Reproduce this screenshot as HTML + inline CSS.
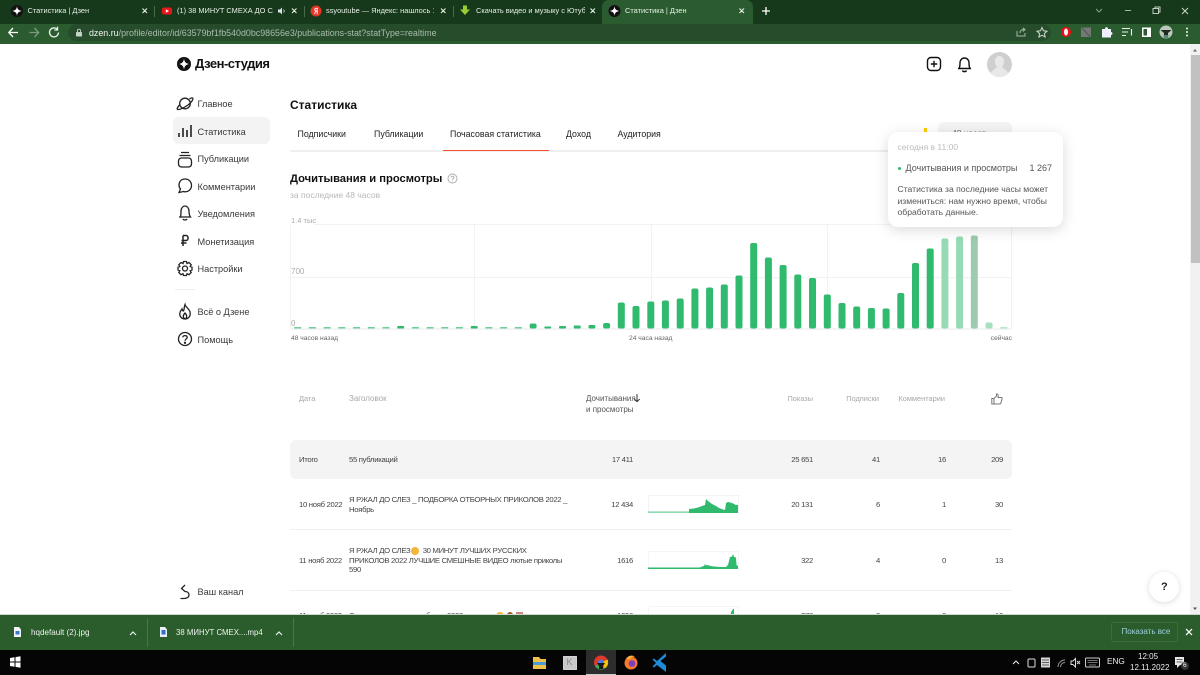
<!DOCTYPE html>
<html lang="ru"><head><meta charset="utf-8"><title>Статистика | Дзен</title>
<style>
html,body{margin:0;padding:0;width:1200px;height:675px;overflow:hidden;background:#fff}
#r{position:relative;width:1200px;height:675px;overflow:hidden;font-family:"Liberation Sans","Noto Sans CJK SC",sans-serif;filter:blur(.3px)}
.t{position:absolute;white-space:nowrap;line-height:0;font-size:9.5px;color:#333}
.b{position:absolute}
.w{color:#e6efe6;font-size:7.400px}
.n{font-size:9.200px;color:#3a3a3a;left:197.500px}
.h{font-size:7.400px;color:#a8a8a8}
.c{font-size:7.700px;letter-spacing:-.3px;color:#444}
.m{font-size:8.800px;color:#222;top:133.500px}
.l{font-size:6.700px;color:#666;top:338.500px}
.p{font-size:8.600px;color:#555}
svg{position:absolute;overflow:visible}
</style></head><body><div id="r">

<!-- main content -->
<div class="t" style="left:195px;top:64px;font-size:13px;letter-spacing:-.5px;font-weight:bold;color:#111">Дзен-студия</div>
<svg style="left:176px;top:56px" width="16" height="16" viewBox="0 0 16 16"><circle cx="8" cy="8" r="7" fill="#111"/><path d="M8 2.200C8.300 6 10 7.700 13.800 8 10 8.300 8.300 10 8 13.800 7.700 10 6 8.300 2.200 8 6 7.700 7.700 6 8 2.200Z" fill="#fff"/></svg>

<div class="b" style="left:173px;top:117px;width:97px;height:27px;background:#f3f3f3;border-radius:6px"></div>
<div class="t n" style="top:104px">Главное</div>
<div class="t n" style="top:131.500px">Статистика</div>
<div class="t n" style="top:159px">Публикации</div>
<div class="t n" style="top:186.500px">Комментарии</div>
<div class="t n" style="top:214px">Уведомления</div>
<div class="t n" style="top:241.500px">Монетизация</div>
<div class="t n" style="top:269px">Настройки</div>
<div class="b" style="left:175px;top:289px;width:20px;height:1px;background:#eee"></div>
<div class="t n" style="top:312px">Всё о Дзене</div>
<div class="t n" style="top:339.500px">Помощь</div>
<div class="t n" style="top:591.500px">Ваш канал</div>

<svg style="left:176px;top:95px" width="18" height="260" viewBox="0 0 18 260" fill="none" stroke="#222" stroke-width="1.300">
<circle cx="9" cy="8.500" r="5.300"/><path d="M4 9.500C1.500 12 .7 13.800 1.500 14.300 3 15.200 8 12.800 12 10 15.500 7.500 17.500 4 16.800 3.200 16.200 2.500 15 3 13.500 3.800"/>
<path d="M3 42V38M7 42V33M11 42V35M15 42V30" stroke-width="1.600"/>
<path d="M5 57.500H13M3.500 60.500H14.500"/><rect x="2.500" y="63" width="13" height="9" rx="3"/>
<path d="M9 84C5 84 3 87 3 90C3 92 4 93.500 4.500 94L3 97.500 7.500 96.500C8 96.700 8.500 96.800 9 96.800 13 96.800 15.500 94 15.500 90.500 15.500 87 13 84 9 84Z"/>
<path d="M4.500 122C5 120 5 118 5 116 5 113 7 111 9 111 11 111 13 113 13 116 13 118 13 120 14.500 122ZM3 122H15M7 124C7.500 125.300 10.500 125.300 11 124"/>
<path d="M7 140.500H10C12.800 140.500 12.800 145.500 10 145.500H5.500M7 140.500V151M5 148H10.500" stroke-width="1.500"/>
<circle cx="9" cy="173.500" r="2.500"/><path d="M7.500 166.500H10.500L11 168.500 13 167.500 15.200 169.700 14.200 171.500 16 172.200V175L14.200 175.700 15.200 177.500 13 179.700 11 178.700 10.500 180.500H7.500L7 178.700 5 179.700 2.800 177.500 3.800 175.700 2 175V172.200L3.800 171.500 2.800 169.700 5 167.500 7 168.500Z"/>
<path d="M9 209.500C9.500 212 13 213.500 14 217 15 221 12.500 224 9 224 5.500 224 3 221 4 217.500 4.500 215.500 5.500 215 6 214 6.500 215.500 7 216 7.500 216 8.500 214 8 212 9 209.500ZM9 224C7 223 6.500 220.500 9 218 11.500 220.500 11 223 9 224Z"/>
<circle cx="9" cy="244" r="6.500"/><path d="M6.800 242.300C7 240 11.200 240 11.200 242.500 11.200 244 9 244 9 245.800"/><circle cx="9" cy="247.800" r=".5" fill="#222"/>
</svg>
<svg style="left:176px;top:583px" width="18" height="18" viewBox="0 0 18 18" fill="none" stroke="#222" stroke-width="1.300"><path d="M9 2L5.500 5.500 9 8.500C12 8.500 13 10.500 13 12 13 14 11 15.500 8 15.500H4.500"/></svg>

<svg style="left:926px;top:56px" width="16" height="16" viewBox="0 0 16 16" fill="none" stroke="#111" stroke-width="1.400"><rect x="1.500" y="1.500" width="13" height="13" rx="3.500"/><path d="M8 4.800V11.200M4.800 8H11.200"/></svg>
<svg style="left:957px;top:56px" width="15" height="17" viewBox="0 0 15 17" fill="none" stroke="#111" stroke-width="1.400"><path d="M2 12.500C3 11 3 9 3 7 3 4 5 2 7.500 2 10 2 12 4 12 7 12 9 12 11 13 12.500ZM1 12.500H14M5.500 14.500C6 16 9 16 9.500 14.500"/></svg>
<svg style="left:987px;top:52px" width="25" height="25" viewBox="0 0 25 25"><defs><clipPath id="av"><circle cx="12.500" cy="12.500" r="12.500"/></clipPath></defs><circle cx="12.500" cy="12.500" r="12.500" fill="#cfcfcf"/><g clip-path="url(#av)" fill="#e8e8e8"><path d="M12.500 4C9.500 4 8 6.500 8 9.500 8 12 9 14 10 15L3 21V25H22V21L15 15C16 14 17 12 17 9.500 17 6.500 15.500 4 12.500 4Z"/></g></svg>

<div class="t" style="left:290px;top:105px;font-size:12px;font-weight:bold;color:#111">Статистика</div>
<div class="t m" style="left:297.500px">Подписчики</div>
<div class="t m" style="left:374px">Публикации</div>
<div class="t m" style="left:450px">Почасовая статистика</div>
<div class="t m" style="left:566px">Доход</div>
<div class="t m" style="left:617.500px">Аудитория</div>
<div class="b" style="left:290px;top:150px;width:721px;height:1.500px;background:#efefef"></div>
<div class="b" style="left:443px;top:149.500px;width:106px;height:1.500px;background:#fc5230"></div>
<div class="b" style="left:924px;top:128px;width:3px;height:6px;background:#fc0"></div>
<div class="b" style="left:938px;top:122px;width:74px;height:26px;background:#f4f4f4;border-radius:6px"></div>
<div class="t" style="left:952px;top:133px;font-size:8.500px;color:#666">48 часов</div>
<div class="t" style="left:290px;top:179px;font-size:11.200px;font-weight:bold;color:#111">Дочитывания и просмотры</div>
<svg style="left:447px;top:173px" width="11" height="11" viewBox="0 0 11 11" fill="none" stroke="#aaa" stroke-width=".9"><circle cx="5.500" cy="5.500" r="4.500"/><path d="M4 4.300C4.200 2.800 7 2.800 7 4.500 7 5.500 5.500 5.500 5.500 6.800M5.500 7.600V8.300"/></svg>
<div class="t" style="left:290px;top:195px;font-size:8.500px;color:#b8b8b8">за последние 48 часов</div>

<!-- chart -->
<svg style="left:0;top:0" width="1200" height="675">
<g stroke="#f2f2f2" stroke-width="1" fill="none">
<path d="M290.500 224.500H1011.500V328.500M290.500 277.500H1011.500M290.500 224.500V328.500M474.500 224.500V328.500M651.500 224.500V328.500M827.500 224.500V328.500"/>
<path d="M290.500 329H1011.500" stroke="#e8eaf0"/>
</g>
<g fill="#2fba6e">
<rect x="294.200" y="327" width="7" height="1.500" fill="#6fd09a"/><rect x="308.900" y="327" width="7" height="1.500" fill="#6fd09a"/><rect x="323.600" y="327" width="7" height="1.500" fill="#6fd09a"/><rect x="338.300" y="327" width="7" height="1.500" fill="#6fd09a"/><rect x="353" y="327" width="7" height="1.500" fill="#6fd09a"/><rect x="367.800" y="327" width="7" height="1.500" fill="#6fd09a"/><rect x="382.500" y="327" width="7" height="1.500" fill="#6fd09a"/>
<rect x="397.200" y="326" width="7" height="2.500" rx="1"/>
<rect x="411.900" y="327" width="7" height="1.500" fill="#6fd09a"/><rect x="426.600" y="327" width="7" height="1.500" fill="#6fd09a"/><rect x="441.300" y="327" width="7" height="1.500" fill="#6fd09a"/><rect x="456" y="327" width="7" height="1.500" fill="#6fd09a"/>
<rect x="470.700" y="326" width="7" height="2.500" rx="1"/>
<rect x="485.400" y="327" width="7" height="1.500" fill="#6fd09a"/><rect x="500.100" y="327" width="7" height="1.500" fill="#6fd09a"/><rect x="514.900" y="327" width="7" height="1.500" fill="#6fd09a"/>
<rect x="529.600" y="323.500" width="7" height="5" rx="2"/>
<rect x="544.300" y="326.500" width="7" height="2" rx="1"/>
<rect x="559" y="326" width="7" height="2.500" rx="1"/>
<rect x="573.700" y="325.500" width="7" height="3" rx="1"/>
<rect x="588.400" y="325" width="7" height="3.500" rx="1.500"/>
<rect x="603.100" y="323" width="7" height="5.500" rx="2"/>
<rect x="617.800" y="302.500" width="7" height="26" rx="2"/>
<rect x="632.500" y="306" width="7" height="22.500" rx="2"/>
<rect x="647.300" y="301.500" width="7" height="27" rx="2"/>
<rect x="661.900" y="300.500" width="7" height="28" rx="2"/>
<rect x="676.700" y="298.500" width="7" height="30" rx="2"/>
<rect x="691.400" y="288.500" width="7" height="40" rx="2"/>
<rect x="706.100" y="287.500" width="7" height="41" rx="2"/>
<rect x="720.800" y="284.500" width="7" height="44" rx="2"/>
<rect x="735.500" y="275.500" width="7" height="53" rx="2"/>
<rect x="750.200" y="243" width="7" height="85.500" rx="2"/>
<rect x="764.900" y="257.500" width="7" height="71" rx="2"/>
<rect x="779.600" y="265" width="7" height="63.500" rx="2"/>
<rect x="794.300" y="274.500" width="7" height="54" rx="2"/>
<rect x="809" y="278" width="7" height="50.500" rx="2"/>
<rect x="823.800" y="294.500" width="7" height="34" rx="2"/>
<rect x="838.500" y="303" width="7" height="25.500" rx="2"/>
<rect x="853.200" y="306.500" width="7" height="22" rx="2"/>
<rect x="867.900" y="308" width="7" height="20.500" rx="2"/>
<rect x="882.600" y="308.500" width="7" height="20" rx="2"/>
<rect x="897.300" y="293" width="7" height="35.500" rx="2"/>
<rect x="912" y="263" width="7" height="65.500" rx="2"/>
<rect x="926.700" y="248.500" width="7" height="80" rx="2"/>
<rect x="941.400" y="238.500" width="7" height="90" rx="2" fill="#96dbb3"/>
<rect x="956.100" y="236.500" width="7" height="92" rx="2" fill="#96dbb3"/>
<rect x="970.800" y="235.500" width="7" height="93" rx="2" fill="#9dcbad"/>
<rect x="985.600" y="322.500" width="7" height="6" rx="2" fill="#a5e0bf"/>
<rect x="1000.300" y="327" width="7" height="1.500" fill="#b5e6cb"/>
</g>
</svg>
<div class="b" style="left:290px;top:216px;width:24px;height:9px;background:#fff"></div>
<div class="t" style="left:291px;top:220.500px;font-size:7.500px;color:#aaa">1.4 тыс</div>
<div class="t" style="left:291px;top:272px;font-size:8px;color:#aaa">700</div>
<div class="t" style="left:291px;top:324px;font-size:8px;color:#aaa">0</div>
<div class="t l" style="left:291px">48 часов назад</div>
<div class="t l" style="left:629px">24 часа назад</div>
<div class="t l" style="right:188px">сейчас</div>

<!-- table -->
<div class="t h" style="left:299px;top:399px">Дата</div>
<div class="t h" style="left:349px;top:399px;font-size:8px">Заголовок</div>
<div class="t" style="left:586px;top:399px;font-size:8px;color:#555">Дочитывания</div>
<div class="t" style="left:586px;top:409.500px;font-size:8px;color:#555">и просмотры</div>
<svg style="left:633px;top:393px" width="8" height="10" viewBox="0 0 8 10" fill="none" stroke="#333" stroke-width="1"><path d="M4 1V8.500M1.300 6L4 8.700 6.700 6"/></svg>
<div class="t h" style="right:387px;top:399px">Показы</div>
<div class="t h" style="right:321px;top:399px">Подписки</div>
<div class="t h" style="right:255px;top:399px">Комментарии</div>
<svg style="left:991px;top:393px" width="12" height="12" viewBox="0 0 12 12" fill="none" stroke="#777" stroke-width="1"><path d="M.8 5.500H3V11H.8ZM3 5.500L5.500 3V1C7 .7 7.500 2 7 4.500H10.500C11.300 4.500 11.300 5.500 11 6L9.800 10.200C9.600 10.800 9.200 11 8.700 11H3"/></svg>

<div class="b" style="left:290px;top:440px;width:722px;height:39px;background:#f4f4f4;border-radius:6px"></div>
<div class="t c" style="left:299px;top:460px">Итого</div>
<div class="t c" style="left:349px;top:460px">55 публикаций</div>
<div class="t c" style="right:567px;top:460px">17 411</div>
<div class="t c" style="right:387px;top:460px">25 651</div>
<div class="t c" style="right:320px;top:460px">41</div>
<div class="t c" style="right:254px;top:460px">16</div>
<div class="t c" style="right:197px;top:460px">209</div>

<div class="t c" style="left:299px;top:505px">10 нояб 2022</div>
<div class="t c" style="left:349px;top:500px">Я РЖАЛ ДО СЛЕЗ _ ПОДБОРКА ОТБОРНЫХ ПРИКОЛОВ 2022 _</div>
<div class="t c" style="left:349px;top:510px">Ноябрь</div>
<div class="t c" style="right:567px;top:505px">12 434</div>
<svg style="left:648px;top:495px" width="91" height="18" viewBox="0 0 91 18"><rect x=".5" y=".5" width="90" height="17" fill="none" stroke="#f3f3f3"/><path d="M0 16.500H41V17.800H0Z" fill="#6fcf9a"/><path d="M41 18V14L46 13.500 50 12.500 54 11 57 10 58 4 60 6 64 9 68 11 71 13 75 14.500 77 15 78 8 80 7 84 8 87 9.500 87.500 10 90 10V18Z" fill="#2fba6e"/></svg>
<div class="t c" style="right:387px;top:505px">20 131</div>
<div class="t c" style="right:320px;top:505px">6</div>
<div class="t c" style="right:254px;top:505px">1</div>
<div class="t c" style="right:197px;top:505px">30</div>
<div class="b" style="left:290px;top:529px;width:722px;height:1px;background:#f0f0f0"></div>

<div class="t c" style="left:299px;top:560.500px">11 нояб 2022</div>
<div class="t c" style="left:349px;top:550.500px">Я РЖАЛ ДО СЛЕЗ</div>
<div class="b" style="left:411px;top:546.500px;width:8px;height:8px;border-radius:50%;background:#f5b53a"></div>
<div class="t c" style="left:422.700px;top:550.500px">30 МИНУТ ЛУЧШИХ РУССКИХ</div>
<div class="t c" style="left:349px;top:560.500px">ПРИКОЛОВ 2022 ЛУЧШИЕ СМЕШНЫЕ ВИДЕО лютые приколы</div>
<div class="t c" style="left:349px;top:570px">590</div>
<div class="t c" style="right:567px;top:560.500px">1616</div>
<svg style="left:648px;top:551px" width="91" height="18" viewBox="0 0 91 18"><rect x=".5" y=".5" width="90" height="17" fill="none" stroke="#f5f5f5"/><path d="M0 16.500H52L54 15.500 56 15 57 13 58 14.500 60 14 62 15 66 15.500 72 16 78 16 80 14 82 6 84 5.500 85 3 86 6 88 6.500 88.500 14 90 15V18H0Z" fill="#2fba6e"/></svg>
<div class="t c" style="right:387px;top:560.500px">322</div>
<div class="t c" style="right:320px;top:560.500px">4</div>
<div class="t c" style="right:254px;top:560.500px">0</div>
<div class="t c" style="right:197px;top:560.500px">13</div>
<div class="b" style="left:290px;top:590px;width:722px;height:1px;background:#f0f0f0"></div>

<div class="t c" style="left:299px;top:616px">11 нояб 2022</div>
<div class="t c" style="left:349px;top:616px">Смешные приколы подборка 2022 лютые приколы</div>
<div class="b" style="left:496px;top:611.500px;width:8px;height:8px;border-radius:50%;background:#f5b53a"></div>
<div class="b" style="left:506.500px;top:611.500px;width:6px;height:6px;border-radius:50%;background:#a5562a"></div>
<div class="b" style="left:516px;top:611.500px;width:7px;height:6px;background:#c98a7a"></div>
<div class="t c" style="right:567px;top:616px">1096</div>
<div class="t c" style="right:387px;top:616px">372</div>
<div class="t c" style="right:320px;top:616px">3</div>
<div class="t c" style="right:254px;top:616px">0</div>
<div class="t c" style="right:197px;top:616px">10</div>
<svg style="left:648px;top:606px" width="91" height="12" viewBox="0 0 91 12"><path d="M.5 12V.5H90.500V12" fill="none" stroke="#f5f5f5"/><path d="M83 12V6L85 3 86 3V12Z" fill="#2fba6e"/></svg>

<!-- tooltip -->
<div class="b" style="left:887.500px;top:132px;width:175px;height:95px;background:#fff;border-radius:10px;box-shadow:0 3px 14px rgba(0,0,0,.15)"></div>
<div class="t" style="left:897.500px;top:147px;font-size:8.500px;color:#bbb">сегодня в 11:00</div>
<div class="b" style="left:897.500px;top:166.500px;width:3px;height:3px;border-radius:50%;background:#2fba6e"></div>
<div class="t" style="left:905.500px;top:168px;font-size:9px;color:#555">Дочитывания и просмотры</div>
<div class="t" style="right:148px;top:168px;font-size:9px;color:#555">1 267</div>
<div class="t p" style="left:897.500px;top:189px">Статистика за последние часы может</div>
<div class="t p" style="left:897.500px;top:200.500px">измениться: нам нужно время, чтобы</div>
<div class="t p" style="left:897.500px;top:211.500px">обработать данные.</div>

<!-- help -->
<div class="b" style="left:1149px;top:572px;width:30px;height:30px;border-radius:50%;background:#fff;box-shadow:0 1px 6px rgba(0,0,0,.15)"></div>
<div class="t" style="left:1161px;top:587px;font-size:11px;font-weight:bold;color:#222">?</div>

<!-- scrollbar -->
<div class="b" style="left:1190px;top:44px;width:10px;height:570px;background:#f1f1f1"></div>
<div class="b" style="left:1191px;top:55px;width:8.500px;height:208px;background:#c1c1c1"></div>
<svg style="left:1190px;top:47px" width="10" height="6"><path d="M3 4.500H7L5 2Z" fill="#666"/></svg>
<svg style="left:1190px;top:606px" width="10" height="6"><path d="M3 1.500H7L5 4Z" fill="#555"/></svg>

<!-- chrome -->
<div class="b" style="left:0;top:0;width:1200px;height:24px;background:#17391b"></div>
<div class="b" style="left:0;top:24px;width:1200px;height:20px;background:#2b5c30"></div>
<div class="b" style="left:602px;top:0;width:151px;height:24px;background:#2b5c30;border-radius:7px 7px 0 0"></div>
<div class="b" style="left:68px;top:24px;width:983px;height:17px;background:#264c2c;border-radius:9px"></div>

<svg style="left:0;top:0" width="1200" height="44">
<circle cx="17" cy="11" r="6" fill="#111"/><path d="M17 6C17.200 9 18.500 10.500 22 11 18.500 11.500 17.200 13 17 16 16.800 13 15.500 11.500 12 11 15.500 10.500 16.800 9 17 6Z" fill="#fff"/>
<circle cx="614.500" cy="11" r="6" fill="#111"/><path d="M614.500 6C614.700 9 616 10.500 619.500 11 616 11.500 614.700 13 614.500 16 614.300 13 613 11.500 609.500 11 613 10.500 614.300 9 614.500 6Z" fill="#fff"/>
<rect x="162" y="7.500" width="10" height="7" rx="2" fill="#e8141c"/><path d="M165.800 9.300L169 11 165.800 12.700Z" fill="#fff"/>
<circle cx="316" cy="11" r="5.500" fill="#e53527"/><path d="M317.200 7.800V14.200M317.200 8.300H316C314.500 8.300 314.300 11 316 11H317.200M315.800 11L314.500 14" stroke="#fff" stroke-width=".9" fill="none"/>
<path d="M463 5.500H467V9.500H470L465 15 460 9.500H463Z" fill="#9acd32"/>
<g stroke="#4a6a4c" stroke-width="1"><path d="M154.500 6V17M304.500 6V17M453.500 6V17"/></g>
<g stroke="#e6efe6" stroke-width="1.100" fill="none"><path d="M142.500 8.500L147 13M147 8.500L142.500 13M292 8.500L296.500 13M296.500 8.500L292 13M441 8.500L445.500 13M445.500 8.500L441 13M590.500 8.500L595 13M595 8.500L590.500 13M739.500 8.500L744 13M744 8.500L739.500 13"/></g>
<path d="M278 9.500H280L282 7.500V14.500L280 12.500H278Z" fill="#dde"/><path d="M283.500 9.500Q285 11 283.500 12.500" stroke="#dde" fill="none" stroke-width=".8"/>
<path d="M766 7V15M762 11H770" stroke="#fff" stroke-width="1.300"/>
<path d="M1096 9L1099 12 1102 9" stroke="#8aa08c" fill="none"/>
<path d="M1125 10.500H1131" stroke="#a5b5a6"/>
<path d="M1153 8.500H1158.500V13.500H1153ZM1155 8.500V7H1160V12H1158.500" stroke="#c0ccc0" fill="none"/>
<path d="M1182 8L1188 14M1188 8L1182 14" stroke="#c8d4c8" fill="none"/>
<!-- toolbar -->
<path d="M18 32.500H9M13 28L8.800 32.500 13 37" stroke="#fff" stroke-width="1.300" fill="none"/>
<path d="M29.500 32.500H38.500M34.500 28L38.700 32.500 34.500 37" stroke="#7c9a7f" stroke-width="1.300" fill="none"/>
<path d="M58.500 32.500A4.500 4.500 0 1 1 57 29M57.500 26.800V30H54.300" stroke="#f0f4f0" stroke-width="1.300" fill="none"/>
<rect x="76" y="32" width="6" height="4.500" rx=".8" fill="#c5d2c6"/><path d="M77.500 32V30.500C77.500 28.800 80.500 28.800 80.500 30.500V32" stroke="#c5d2c6" fill="none" stroke-width=".9"/>
<path d="M1017 31V36H1025V33M1020 33C1020 30.500 1022 29.500 1024 29.500M1022.800 27.800L1025 29.500 1022.800 31.500" stroke="#a8b9aa" fill="none"/>
<path d="M1042 27.500L1043.500 30.800 1047 31.200 1044.400 33.500 1045.100 37 1042 35.200 1038.900 37 1039.600 33.500 1037 31.200 1040.500 30.800Z" stroke="#d0dad0" fill="none"/>
<circle cx="1066" cy="32" r="5" fill="#e81018"/><ellipse cx="1066" cy="32" rx="2" ry="3.500" fill="#fff"/>
<path d="M1081 27.500H1091V37H1081Z" fill="#777"/><path d="M1082 28L1090 36.500" stroke="#4f6352" stroke-width="1.500"/>
<path d="M1102 29H1105C1105 26.500 1108 26.500 1108 29H1111V32C1113 32 1113 35 1111 35V37.500H1102Z" fill="#eef"/>
<path d="M1122 28.500H1130M1122 32H1128M1122 35.500H1126M1131.500 29V35.500" stroke="#eef2ee" stroke-width="1.100" fill="none"/>
<rect x="1142" y="27.500" width="9" height="9.500" fill="#fff"/><rect x="1143.500" y="29" width="3.500" height="6.500" fill="#2b5c30"/>
<circle cx="1166" cy="32" r="6.500" fill="#bcc7bd"/><path d="M1160.500 30H1171.500L1168 33V38H1164V33Z" fill="#1d2a1e"/><path d="M1162 35L1164 38H1168L1170 35" fill="#7a9" opacity=".7"/>
<g fill="#f0f4f0"><circle cx="1187" cy="28.500" r="1"/><circle cx="1187" cy="32" r="1"/><circle cx="1187" cy="35.500" r="1"/></g>
</svg>
<div class="t w" style="left:27.500px;top:11px">Статистика | Дзен</div>
<div class="t w" style="left:177px;top:11px;width:96px;overflow:hidden;height:12px;line-height:12px;margin-top:-6px">(1) 38 МИНУТ СМЕХА ДО СЛЕЗ</div>
<div class="t w" style="left:326px;top:11px;width:108px;overflow:hidden;height:12px;line-height:12px;margin-top:-6px">ssyoutube — Яндекс: нашлось 1 млн</div>
<div class="t w" style="left:476px;top:11px;width:109px;overflow:hidden;height:12px;line-height:12px;margin-top:-6px">Скачать видео и музыку с Ютуба</div>
<div class="t w" style="left:625px;top:11px">Статистика | Дзен</div>
<div class="t" style="left:89px;top:32.500px;font-size:8.900px;color:#a9bcab"><span style="color:#f0f4f0">dzen.ru</span>/profile/editor/id/63579bf1fb540d0bc98656e3/publications-stat?statType=realtime</div>

<!-- downloads bar -->
<div class="b" style="left:0;top:614px;width:1200px;height:1px;background:#cfd6cf"></div>
<div class="b" style="left:0;top:615px;width:1200px;height:35px;background:#2a5c2c"></div>
<svg style="left:0;top:615px" width="1200" height="35">
<path d="M14 12H19L21 14.500V22H14Z" fill="#f2f5f8"/><rect x="15.500" y="16" width="4" height="3.500" fill="#3b78c9"/>
<path d="M160 12H165L167 14.500V22H160Z" fill="#e8eff8"/><rect x="161.500" y="15" width="4" height="4.500" fill="#2f6fc4"/>
<path d="M130 20L133 17 136 20M276 20L279 17 282 20" stroke="#e8efe8" fill="none" stroke-width="1.200"/>
<path d="M147.500 3V32M293.500 3V32" stroke="#4a764c"/>
<rect x="1111.500" y="7.500" width="66" height="19" rx="2" fill="none" stroke="#3f6b42"/>
<path d="M1186 14L1192 20M1192 14L1186 20" stroke="#f0f4f0" stroke-width="1.300"/>
</svg>
<div class="t" style="left:31px;top:633px;font-size:8.100px;color:#eef3ee">hqdefault (2).jpg</div>
<div class="t" style="left:176px;top:633px;font-size:7.800px;color:#eef3ee">38 МИНУТ СМЕХ....mp4</div>
<div class="t" style="left:1121.500px;top:632px;font-size:8px;color:#9fcfe0">Показать все</div>

<!-- taskbar -->
<div class="b" style="left:0;top:650px;width:1200px;height:25px;background:#050505"></div>
<div class="b" style="left:586px;top:650px;width:30px;height:25px;background:#2d2d2d"></div>
<div class="b" style="left:586px;top:674px;width:30px;height:1px;background:#ccc"></div>
<svg style="left:0;top:650px" width="1200" height="25">
<path d="M10 8L14.500 7.300V11.500H10ZM15.500 7.100L20.500 6.300V11.500H15.500ZM10 12.500H14.500V16.700L10 16ZM15.500 12.500H20.500V17.700L15.500 16.900Z" fill="#fff"/>
<path d="M533 7H539L540.500 9H546V19H533Z" fill="#f0c14a"/><rect x="533" y="12" width="13" height="3" fill="#4a9bd8"/>
<rect x="563.500" y="6.500" width="13" height="13" fill="#c8c8c8"/><rect x="563.500" y="6.500" width="13" height="13" fill="none" stroke="#eee" stroke-width=".8"/>
<circle cx="601" cy="12.500" r="7" fill="#e0392b"/><path d="M601 12.500L594.900 16A7 7 0 0 0 605 18.300Z" fill="#3aa757"/><path d="M601 12.500L605 18.300A7 7 0 0 0 607.500 9.500Z" fill="#f4c20d"/><circle cx="601" cy="12.500" r="3" fill="#3f7fe8"/><path d="M597 13H605L603 16V19H599V16Z" fill="#1a1a1a"/>
<circle cx="631" cy="13" r="6.500" fill="#f5792a"/><circle cx="632" cy="13.500" r="3.300" fill="#7a3fc0"/><path d="M626 9C628 5 633 5 635 6.500 632 6.500 631 8 630 9Z" fill="#fbb040"/>
<path d="M666 6L657 14 654 11.500 652.500 12.500 656 16 652.500 19.500 654 20.500 657 18 666 25ZM666 9.500V18.500L660.500 14Z" fill="#1f8ad6" transform="translate(0,-3)"/>
<path d="M1013 14L1016 11 1019 14" stroke="#eee" fill="none"/>
<rect x="1028" y="9" width="7" height="8" rx="1" fill="none" stroke="#ddd"/>
<rect x="1041" y="7.500" width="9" height="10" fill="#d8d8d8"/><path d="M1042 10H1049M1042 12.500H1049M1042 15H1049" stroke="#333" stroke-width=".7"/>
<path d="M1058 17A7 7 0 0 1 1065 10M1060.500 17A4.500 4.500 0 0 1 1065 12.500" stroke="#999" fill="none"/>
<path d="M1071 11H1073L1075.500 8.500V17L1073 14.500H1071Z" stroke="#ddd" fill="none"/><path d="M1077 11L1080 14M1080 11L1077 14" stroke="#ddd"/>
<rect x="1085.500" y="8" width="14" height="9" rx="1" fill="none" stroke="#ccc"/><path d="M1087.500 10.500H1097.500M1087.500 12.500H1097.500M1089 15H1096" stroke="#999" stroke-width=".8"/>
<path d="M1175 7H1184V15H1180L1177 18V15H1175Z" fill="#e8e8e8"/><path d="M1176.500 9.500H1182.500M1176.500 12H1182.500" stroke="#333" stroke-width=".7"/>
<circle cx="1185" cy="16" r="4" fill="#333"/>
</svg>
<div class="t" style="left:1107px;top:662px;font-size:8.200px;color:#eee">ENG</div>
<div class="t" style="left:1138px;top:656.500px;font-size:8px;color:#eee">12:05</div>
<div class="t" style="left:1130px;top:668px;font-size:8px;color:#eee">12.11.2022</div>
<div class="t" style="left:1183px;top:666px;font-size:6.500px;color:#fff">6</div>
<div class="t" style="left:566.500px;top:662px;font-size:9px;color:#888">K</div>

</div></body></html>
